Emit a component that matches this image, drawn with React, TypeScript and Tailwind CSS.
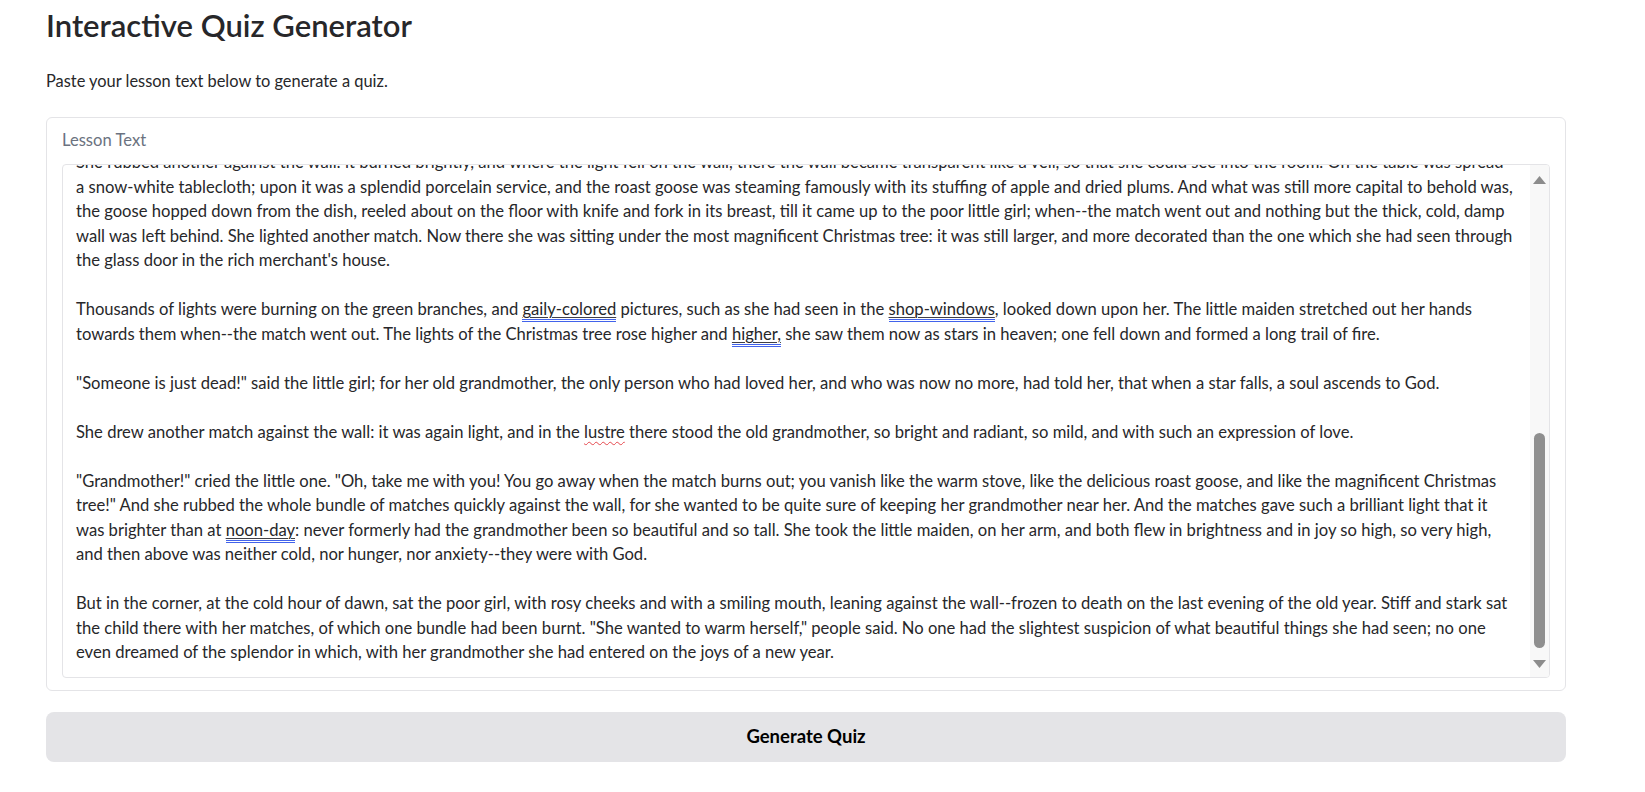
import React from "react";

type Mark = "grammar" | "spell";
type Seg = string | {text: string; mark: Mark};

// lesson text as shown in the textarea, already broken into visual lines
const LINES: Seg[][] = [
	[
		"She rubbed another against the wall: it burned brightly, and where the light fell on the wall, there the wall became transparent like a veil, so that she could see into the room. On the table was spread",
	],
	[
		"a snow-white tablecloth; upon it was a splendid porcelain service, and the roast goose was steaming famously with its stuffing of apple and dried plums. And what was still more capital to behold was,",
	],
	[
		"the goose hopped down from the dish, reeled about on the floor with knife and fork in its breast, till it came up to the poor little girl; when--the match went out and nothing but the thick, cold, damp",
	],
	[
		"wall was left behind. She lighted another match. Now there she was sitting under the most magnificent Christmas tree: it was still larger, and more decorated than the one which she had seen through",
	],
	["the glass door in the rich merchant's house."],
	[],
	[
		"Thousands of lights were burning on the green branches, and ",
		{text: "gaily-colored", mark: "grammar"},
		" pictures, such as she had seen in the ",
		{text: "shop-windows", mark: "grammar"},
		", looked down upon her. The little maiden stretched out her hands",
	],
	[
		"towards them when--the match went out. The lights of the Christmas tree rose higher and ",
		{text: "higher,", mark: "grammar"},
		" she saw them now as stars in heaven; one fell down and formed a long trail of fire.",
	],
	[],
	[
		'"Someone is just dead!" said the little girl; for her old grandmother, the only person who had loved her, and who was now no more, had told her, that when a star falls, a soul ascends to God.',
	],
	[],
	[
		"She drew another match against the wall: it was again light, and in the ",
		{text: "lustre", mark: "spell"},
		" there stood the old grandmother, so bright and radiant, so mild, and with such an expression of love.",
	],
	[],
	[
		'"Grandmother!" cried the little one. "Oh, take me with you! You go away when the match burns out; you vanish like the warm stove, like the delicious roast goose, and like the magnificent Christmas',
	],
	[
		'tree!" And she rubbed the whole bundle of matches quickly against the wall, for she wanted to be quite sure of keeping her grandmother near her. And the matches gave such a brilliant light that it',
	],
	[
		"was brighter than at ",
		{text: "noon-day", mark: "grammar"},
		": never formerly had the grandmother been so beautiful and so tall. She took the little maiden, on her arm, and both flew in brightness and in joy so high, so very high,",
	],
	["and then above was neither cold, nor hunger, nor anxiety--they were with God."],
	[],
	[
		"But in the corner, at the cold hour of dawn, sat the poor girl, with rosy cheeks and with a smiling mouth, leaning against the wall--frozen to death on the last evening of the old year. Stiff and stark sat",
	],
	[
		'the child there with her matches, of which one bundle had been burnt. "She wanted to warm herself," people said. No one had the slightest suspicion of what beautiful things she had seen; no one',
	],
	["even dreamed of the splendor in which, with her grandmother she had entered on the joys of a new year."],
];

function Segment({seg}: {seg: Seg}) {
	if (typeof seg === "string") return <>{seg}</>;
	if (seg.mark === "spell")
		return (
			<span className="underline decoration-wavy decoration-[#e5484d] decoration-1 underline-offset-[3px]">
				{seg.text}
			</span>
		);
	return (
		<span className="border-b-[3px] border-double border-[#4263eb] underline decoration-[#3f3f46] decoration-1 underline-offset-[2px]">
			{seg.text}
		</span>
	);
}

function Arrow({up}: {up?: boolean}) {
	return (
		<svg width="13" height="8" viewBox="0 0 13 8" className="mx-auto block">
			<polygon
				points={up ? "6.5,0 13,8 0,8" : "0,0 13,0 6.5,8"}
				fill="#8c8c8c"
			/>
		</svg>
	);
}

function FakeScrollbar() {
	return (
		<div className="flex w-[19px] shrink-0 flex-col bg-[#f8f8f8]">
			<div className="mt-[11px]">
				<Arrow up />
			</div>
			<div className="mx-auto mt-[249px] h-[215px] w-[11px] rounded-full bg-[#8f8f8f]" />
			<div className="mt-[12px]">
				<Arrow />
			</div>
		</div>
	);
}

function LessonTextarea() {
	return (
		<div className="flex h-[514px] overflow-hidden rounded-[4px] border border-[#e4e4e7] bg-white">
			<div className="flex-1 overflow-hidden pl-[13px] text-[16.6px] leading-[24.5px] text-[#27272a]">
				<div className="-mt-[15px]">
					{LINES.map((line, i) => (
						<div key={i} className="h-[24.5px] whitespace-nowrap">
							{line.map((seg, j) => (
								<Segment key={j} seg={seg} />
							))}
						</div>
					))}
				</div>
			</div>
			<FakeScrollbar />
		</div>
	);
}

export default function App() {
	return (
		<div className="min-h-screen bg-white font-['Lato','Noto_Sans',sans-serif] text-[#27272a]">
			<div className="ml-[46px] w-[1520px] pt-[5px]">
				<h1 className="text-[31px] font-semibold leading-[40px]">
					Interactive Quiz Generator
				</h1>
				<p className="mt-[24px] text-[16.4px] leading-[24px]">
					Paste your lesson text below to generate a quiz.
				</p>

				<div className="mt-[24px] rounded-[6px] border border-[#e4e4e7] bg-white px-[15px] pb-[12px] pt-[10px]">
					<label className="block text-[16.6px] leading-[24px] text-[#6b7280]">
						Lesson Text
					</label>
					<div className="mt-[12px]">
						<LessonTextarea />
					</div>
				</div>

				<button className="mt-[21px] flex h-[50px] w-full items-center justify-center rounded-[8px] bg-[#e4e4e7] text-[18.5px] font-bold text-black">
					Generate Quiz
				</button>
			</div>
		</div>
	);
}
